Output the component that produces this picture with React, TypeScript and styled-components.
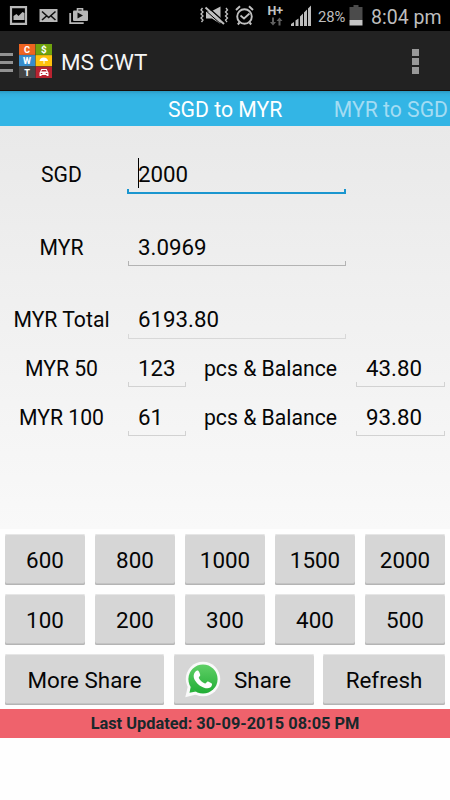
import React from "react";
import styled, { createGlobalStyle } from "styled-components";

const GlobalStyle = createGlobalStyle`
  * { box-sizing: border-box; }
  body { margin: 0; background: #fefefe; font-family: Roboto, "Noto Sans", sans-serif; }
`;

const Screen = styled.div`
  width: 450px;
  height: 800px;
  display: flex;
  flex-direction: column;
  overflow: hidden;
  background: #fefefe;
  color: #060606;
`;

const StatusBar = styled.header`
  height: 31px;
  flex: none;
  display: flex;
  align-items: center;
  background: #000;
  color: #bebebe;
  svg { display: block; flex: none; }
`;

const Percent = styled.span`
  width: 27px;
  margin: 2px 4px 0 7px;
  font-size: 14.8px;
  letter-spacing: -0.1px;
  white-space: nowrap;
`;

const Clock = styled.time`
  margin: 3px 0 0 8px;
  font-size: 19.5px;
  white-space: nowrap;
`;

const ActionBar = styled.div`
  height: 60px;
  flex: none;
  display: flex;
  align-items: center;
  background: #222;
  border-bottom: 1px solid #170d0a;
  svg { display: block; flex: none; }
`;

const Title = styled.h1`
  flex: 1;
  margin: 3px 0 0 9px;
  color: #f5f5f5;
  font-size: 22.4px;
  font-weight: 400;
  line-height: 28px;
`;

const MenuBars = styled.div`
  width: 13px;
  display: grid;
  gap: 5px;
  margin: 3px 6px 0 0;
  span { height: 3px; background: #929292; }
`;

const Overflow = styled.div`
  display: grid;
  gap: 2px;
  margin: 2px 31px 0 0;
  span { width: 7px; height: 7px; background: #999; }
`;

const Tabs = styled.nav`
  height: 35px;
  flex: none;
  display: flex;
  align-items: center;
  justify-content: flex-end;
  gap: 51.5px;
  padding: 2px 2px 0 0;
  background: linear-gradient(#2a9ac3 0, #32aedd 3px, #33b5e5 7px);
`;

const Tab = styled.span<{ $active?: boolean }>`
  color: ${(p) => (p.$active ? "#fff" : "#a3dcf3")};
  font-size: 21.2px;
  line-height: 28px;
  white-space: nowrap;
`;

const Form = styled.main`
  height: 403px;
  flex: none;
  padding-top: 23px;
  background: linear-gradient(#e9e9e9, #f9f9f9);
`;

const Row = styled.div<{ $height: number }>`
  height: ${(p) => p.$height}px;
  display: grid;
  grid-template-columns: 123px 227px 1fr;
  align-items: start;
`;

const SplitRow = styled(Row)`
  grid-template-columns: 123px 67px 161px 98px;
`;

const Label = styled.label<{ $raised?: boolean }>`
  text-align: center;
  font-size: 21.2px;
  line-height: ${(p) => (p.$raised ? 51 : 53)}px;
  white-space: nowrap;
`;

const Field = styled.div<{ $line: string; $weight?: number; $raised?: boolean }>`
  height: 45px;
  margin: 0 4px 0 ${(p) => (p.$weight ? 4 : 5)}px;
  padding: ${(p) => (p.$raised ? 4 : 6)}px 0 0 ${(p) => (p.$weight ? 11 : 10)}px;
  display: flex;
  align-items: center;
  font-size: 22.3px;
  line-height: 30px;
  background:
    linear-gradient(${(p) => p.$line}, ${(p) => p.$line}) left bottom / 100% ${(p) => p.$weight ?? 1}px no-repeat,
    linear-gradient(${(p) => p.$line}, ${(p) => p.$line}) left bottom / ${(p) => p.$weight ?? 1}px 5px no-repeat,
    linear-gradient(${(p) => p.$line}, ${(p) => p.$line}) right bottom / ${(p) => p.$weight ?? 1}px 5px no-repeat;
`;

const Caret = styled.span`
  width: 1px;
  height: 30px;
  margin-right: -1px;
  margin-top: -1px;
  background: #000;
`;

const Keys = styled.section`
  flex: none;
  display: grid;
  grid-template-columns: repeat(5, 80px);
  gap: 9px 10px;
  padding: 5px 5px 0;
`;

const Actions = styled.section`
  flex: none;
  display: grid;
  grid-template-columns: 159px 140px 122px;
  gap: 9.5px;
  padding: 9px 5px 4px;
`;

const Button = styled.button`
  height: 51px;
  padding: 1px 0 0;
  display: flex;
  align-items: center;
  justify-content: center;
  border: 0;
  border-radius: 2px;
  background: #d6d6d6;
  box-shadow: inset 0 1px #e6e6e6, inset 0 -1px #b4b4b4, inset 0 -2px #c4c4c4;
  color: #050505;
  font: 22.4px/28px Roboto, sans-serif;
  white-space: nowrap;
`;

const ShareButton = styled(Button)`
  justify-content: flex-start;
  padding-left: 10px;
  gap: 13.5px;
`;

const Updated = styled.footer`
  height: 29px;
  flex: none;
  background: #ef626c;
  color: #18282b;
  text-align: center;
  font-size: 16.35px;
  font-weight: 700;
  line-height: 30px;
`;

const NotificationIcons = () => (
  <svg width="200" height="31" viewBox="0 0 200 31">
    <g fill="none" stroke="#b8b8b8">
      <path d="M11 7.2h15v16.6H11z" strokeWidth="2.2" />
      <path d="M70.200 13v10.200h13.500" strokeWidth="1.8" />
      <path d="M77.500 11V8.700h5v2.300" strokeWidth="1.6" />
    </g>
    <path d="M13.500 20v-4l3-2 2 2 4-4 2 1v7z" fill="#b8b8b8" />
    <path d="M39.500 9H57.500v13h-18z" fill="#b8b8b8" />
    <path d="m42 11.500 6.700 6 6.800-6M42 20l4.500-4M55.500 20 51 16" fill="none" stroke="#111" strokeWidth="1.6" />
    <rect x="73" y="10.500" width="15" height="10.500" rx="1" fill="#b8b8b8" />
    <path d="m77.500 12.500 5.500 3-5.500 3z" fill="#111" />
  </svg>
);

const SystemIcons = () => (
  <svg width="111" height="31" viewBox="200 0 111 31">
    <g fill="none" stroke="#c0c0c0">
      <path d="m202.500 8-1.500 2 2 2-2 2 2 2-2 2 2 2-1.500 2M226 8l1.500 2-2 2 2 2-2 2 2 2-2 2 1.500 2" strokeWidth="1.3" />
      <circle cx="244.500" cy="16.500" r="7.300" strokeWidth="1.900" />
      <path d="m240.500 15.500 3.500 3 5.500-5" strokeWidth="1.700" />
      <path d="m236 10 4-3.700m9 0 4 3.700M239.500 22.500l-1.700 2m11.700-2 1.700 2" strokeWidth="2" />
    </g>
    <path d="M206 11.500h5l9.500-5V24l-8.500-5.500h-6z" fill="#c0c0c0" />
    <path d="m207 6.500 18 16" fill="none" stroke="#000" strokeWidth="1.500" />
    <path d="m205.500 7.500 18.500 16.500" fill="none" stroke="#c0c0c0" strokeWidth="2" />
    <path d="m204.500 9.500 18 16" fill="none" stroke="#000" strokeWidth="1" />
    <text x="267.500" y="14.500" fill="#c4c4c4" fontFamily="Roboto" fontSize="12.500" fontWeight="700">H+</text>
    <path d="M272.500 18v4.500h-2l3 3.500 3-3.500h-2V18zM279 26v-4.500h-2l3-3.500 3 3.500h-2V26z" fill="#606060" transform="translate(-.5 -.5)" />
    <path d="M291 26v-2l3-2v4zm4.500 0v-5.500l3-2V26zm4.500 0V16.500l3-3V26zm4 0V12.500l3-3V26zm4 0V8.500l3-3V26z" fill="#bdbdbd" />
  </svg>
);

const Battery = () => (
  <svg width="14" height="31" viewBox="0 0 14 31">
    <path d="M4.500 5h5v2H13.500v13h-13V7h4z" fill="#4b4b4b" />
    <path d="M.5 20h13v5.500H.5z" fill="#c5c5c5" />
  </svg>
);

const AppLogo = () => (
  <svg width="33" height="34" viewBox="0 0 33 34" fontFamily="Roboto" fontWeight="800" fontSize="9.200" fill="#fff" textAnchor="middle">
    <path d="M0 0h16.500v11H0z" fill="#ee6420" />
    <path d="M16.500 0H33v11H16.500z" fill="#70a30d" />
    <path d="M0 11h16.500v11.500H0z" fill="#378dcc" />
    <path d="M16.500 11H33v11.500H16.500z" fill="#ffc20c" />
    <path d="M0 22.500h16.500V34H0z" fill="#454545" />
    <path d="M16.500 22.500H33V34H16.500z" fill="#b92330" />
    <path d="M0 11h33M0 22.500h33M16.500 0v34" stroke="#333" strokeOpacity=".35" strokeWidth=".7" />
    <text x="8" y="9">C</text>
    <text x="24.800" y="9" fontSize="9.800">$</text>
    <text x="8" y="20.200">W</text>
    <text x="8" y="31.700">T</text>
    <path d="M20.500 17q.5-3.500 4.300-3.500t4.200 3.500h-3.500v2.800h-1V17z" />
    <path d="M21 28l1.300-3h5.400l1.300 3 .5.600V32h-2v-1H22.500v1h-2v-3.400z" />
    <path d="m22.300 27.500.7-1.500h4l.7 1.500zM21.800 29h1.500v1h-1.500zm5 0h1.500v1h-1.500z" fill="#b92330" />
  </svg>
);

const WhatsAppIcon = () => (
  <svg width="37" height="38" viewBox="0 0 37 38">
    <defs>
      <linearGradient id="whatsapp-green" x2="0" y2="1">
        <stop stopColor="#60d067" />
        <stop offset="1" stopColor="#21ad35" />
      </linearGradient>
    </defs>
    <circle cx="19" cy="18" r="17.200" fill="#fafafa" />
    <path d="M1.300 36.300 3.800 25.500 13 33.300z" fill="#fafafa" />
    <circle cx="19" cy="18" r="14.600" fill="url(#whatsapp-green)" />
    <path d="M5.500 31.700 6.800 25.500 12 30.500z" fill="#2bb33d" />
    <path d="M11.800 10.300c.7-.8 1.800-.8 2.500-.5.500.3 2 3.700 2 4.300 0 .8-1.800 2.200-1.500 2.800 1.300 2.500 3.300 4.400 6.200 5.600.8.300 2-2 2.700-2 .6 0 4 1.800 4.300 2.200.2.900-.3 2.800-1.400 3.600-2.700 2-6.500.9-9.700-1.100-3.300-2-6.400-5.600-7.100-8.700-.5-2.300.4-4.800 2-6.200z" fill="#fff" />
  </svg>
);

const amounts = ["600", "800", "1000", "1500", "2000", "100", "200", "300", "400", "500"];
const breakdown = [
  { label: "MYR 50", pieces: "123", balance: "43.80" },
  { label: "MYR 100", pieces: "61", balance: "93.80" },
];

export default function App() {
  return (
    <>
      <GlobalStyle />
      <Screen>
        <StatusBar>
          <NotificationIcons />
          <SystemIcons />
          <Percent>28%</Percent>
          <Battery />
          <Clock>8:04 pm</Clock>
        </StatusBar>
        <ActionBar>
          <MenuBars><span /><span /><span /></MenuBars>
          <AppLogo />
          <Title>MS CWT</Title>
          <Overflow><span /><span /><span /></Overflow>
        </ActionBar>
        <Tabs>
          <Tab $active>SGD to MYR</Tab>
          <Tab>MYR to SGD</Tab>
        </Tabs>
        <Form>
          <Row $height={72}>
            <Label $raised>SGD</Label>
            <Field $line="#1b96cf" $weight={2} $raised><Caret />2000</Field>
          </Row>
          <Row $height={73}>
            <Label>MYR</Label>
            <Field $line="#b3b3b3">3.0969</Field>
          </Row>
          <Row $height={48}>
            <Label $raised>MYR Total</Label>
            <Field $line="#d8d8d8" $raised>6193.80</Field>
          </Row>
          {breakdown.map((item) => (
            <SplitRow $height={49} key={item.label}>
              <Label>{item.label}</Label>
              <Field $line="#d2d2d2">{item.pieces}</Field>
              <Label as="span">pcs &amp; Balance</Label>
              <Field $line="#d2d2d2">{item.balance}</Field>
            </SplitRow>
          ))}
        </Form>
        <Keys>
          {amounts.map((amount) => <Button key={amount}>{amount}</Button>)}
        </Keys>
        <Actions>
          <Button>More Share</Button>
          <ShareButton><WhatsAppIcon />Share</ShareButton>
          <Button>Refresh</Button>
        </Actions>
        <Updated>Last Updated: 30-09-2015 08:05 PM</Updated>
      </Screen>
    </>
  );
}
